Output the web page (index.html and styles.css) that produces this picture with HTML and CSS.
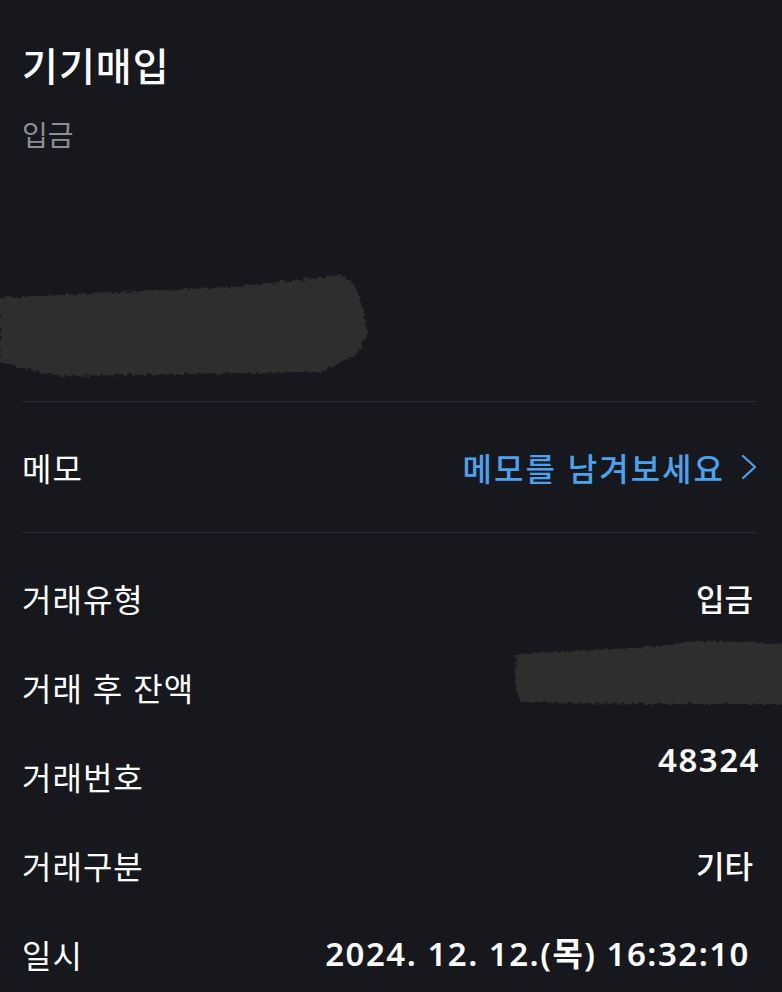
FILE: index.html
```html
<!DOCTYPE html>
<html lang="ko">
<head>
<meta charset="utf-8">
<link rel="stylesheet" href="styles.css">
</head>
<body>
<div class="page">
  <header class="head">
    <h1 class="title">기기매입</h1>
    <div class="subtitle">입금</div>
  </header>
  <div class="blob blob-amount">
    <svg width="372" height="108" viewBox="0 0 372 108">
      <defs>
        <filter id="rough" x="-5%" y="-15%" width="110%" height="130%">
          <feTurbulence type="fractalNoise" baseFrequency="0.25" numOctaves="2" seed="3" result="n"/>
          <feDisplacementMap in="SourceGraphic" in2="n" scale="7" xChannelSelector="R" yChannelSelector="G"/>
        </filter>
      </defs>
      <path d="M0,26 L120,20 L230,15 L300,8 L340,3 L354,12 L364,40 L368,60 L358,82 L320,100 L200,102 L60,104 L20,96 L0,90 Z" fill="#2d2d2e" filter="url(#rough)"/>
    </svg>
  </div>
  <div class="divider"></div>
  <div class="memo-row">
    <span class="label">메모</span>
    <span class="memo-link">메모를 남겨보세요
      <svg class="chev" width="16" height="26" viewBox="0 0 16 26"><path d="M2,2 L14,13 L2,24" fill="none" stroke="#4aa3ee" stroke-width="2.2" stroke-linecap="round" stroke-linejoin="round"/></svg>
    </span>
  </div>
  <div class="divider"></div>
  <div class="list">
    <div class="row"><span class="label">거래유형</span><span class="value">입금</span></div>
    <div class="row"><span class="label">거래 후 잔액</span>
      <span class="blob blob-balance">
        <svg width="270" height="70" viewBox="0 0 270 70">
          <defs>
            <filter id="rough2" x="-5%" y="-15%" width="110%" height="130%">
              <feTurbulence type="fractalNoise" baseFrequency="0.25" numOctaves="2" seed="7" result="n"/>
              <feDisplacementMap in="SourceGraphic" in2="n" scale="6" xChannelSelector="R" yChannelSelector="G"/>
            </filter>
          </defs>
          <path d="M4,16 L80,12 L150,8 L180,3 L240,4 L274,6 L274,66 L120,66 L8,64 L3,44 Z" fill="#2d2d2e" filter="url(#rough2)"/>
        </svg>
      </span>
    </div>
    <div class="row"><span class="label">거래번호</span><span class="value num up">48324</span></div>
    <div class="row"><span class="label">거래구분</span><span class="value">기타</span></div>
    <div class="row"><span class="label">일시</span><span class="value num date">2024. 12. 12.(목) 16:32:10</span></div>
  </div>
</div>
</body>
</html>
```
FILE: styles.css
```css
html, body {
  margin: 0;
  padding: 0;
  background: #16181d;
}
body {
  font-family: "Noto Sans CJK KR", "Noto Sans", sans-serif;
  color: #ffffff;
  width: 782px;
  height: 992px;
  overflow: hidden;
}
.page {
  padding: 40px 26px 0 22px;
}
.head {
  display: flex;
  flex-direction: column;
}
.title {
  margin: 0;
  font-size: 39px;
  line-height: 48px;
  font-weight: 500;
  letter-spacing: 1px;
  color: #ffffff;
}
.subtitle {
  margin-top: 26px;
  font-size: 28px;
  line-height: 40px;
  color: #8c8f95;
}
.blob {
  display: block;
}
.blob svg {
  display: block;
}
.blob-amount {
  margin-top: 118px;
  margin-left: -22px;
  width: 372px;
  height: 108px;
}
.divider {
  height: 1px;
  background: #2c2f35;
}
.blob-amount + .divider {
  margin-top: 21px;
}
.memo-row {
  height: 130px;
  display: flex;
  align-items: center;
  justify-content: space-between;
}
.label {
  font-size: 32px;
  line-height: 40px;
  letter-spacing: 1px;
  color: #ffffff;
}
.memo-link {
  display: flex;
  align-items: center;
  gap: 16px;
  font-size: 32px;
  line-height: 40px;
  letter-spacing: 2px;
  font-weight: 500;
  color: #4aa3ee;
  margin-right: -1px;
}
.chev {
  display: block;
}
.list {
  padding-top: 20px;
}
.row {
  height: 89px;
  display: flex;
  align-items: center;
  justify-content: space-between;
}
.value {
  font-size: 31px;
  line-height: 40px;
  font-weight: 500;
  color: #ffffff;
  margin-right: 3px;
}
.num {
  font-family: "Noto Sans", "Noto Sans CJK KR", sans-serif;
  font-weight: 600;
  font-size: 33px;
  letter-spacing: 1.5px;
}
.up {
  margin-bottom: 32px;
  margin-right: -4px;
}
.date {
  margin-right: 6px;
}
.blob-balance {
  width: 270px;
  height: 70px;
  margin-right: -26px;
  margin-bottom: 28px;
}
```
